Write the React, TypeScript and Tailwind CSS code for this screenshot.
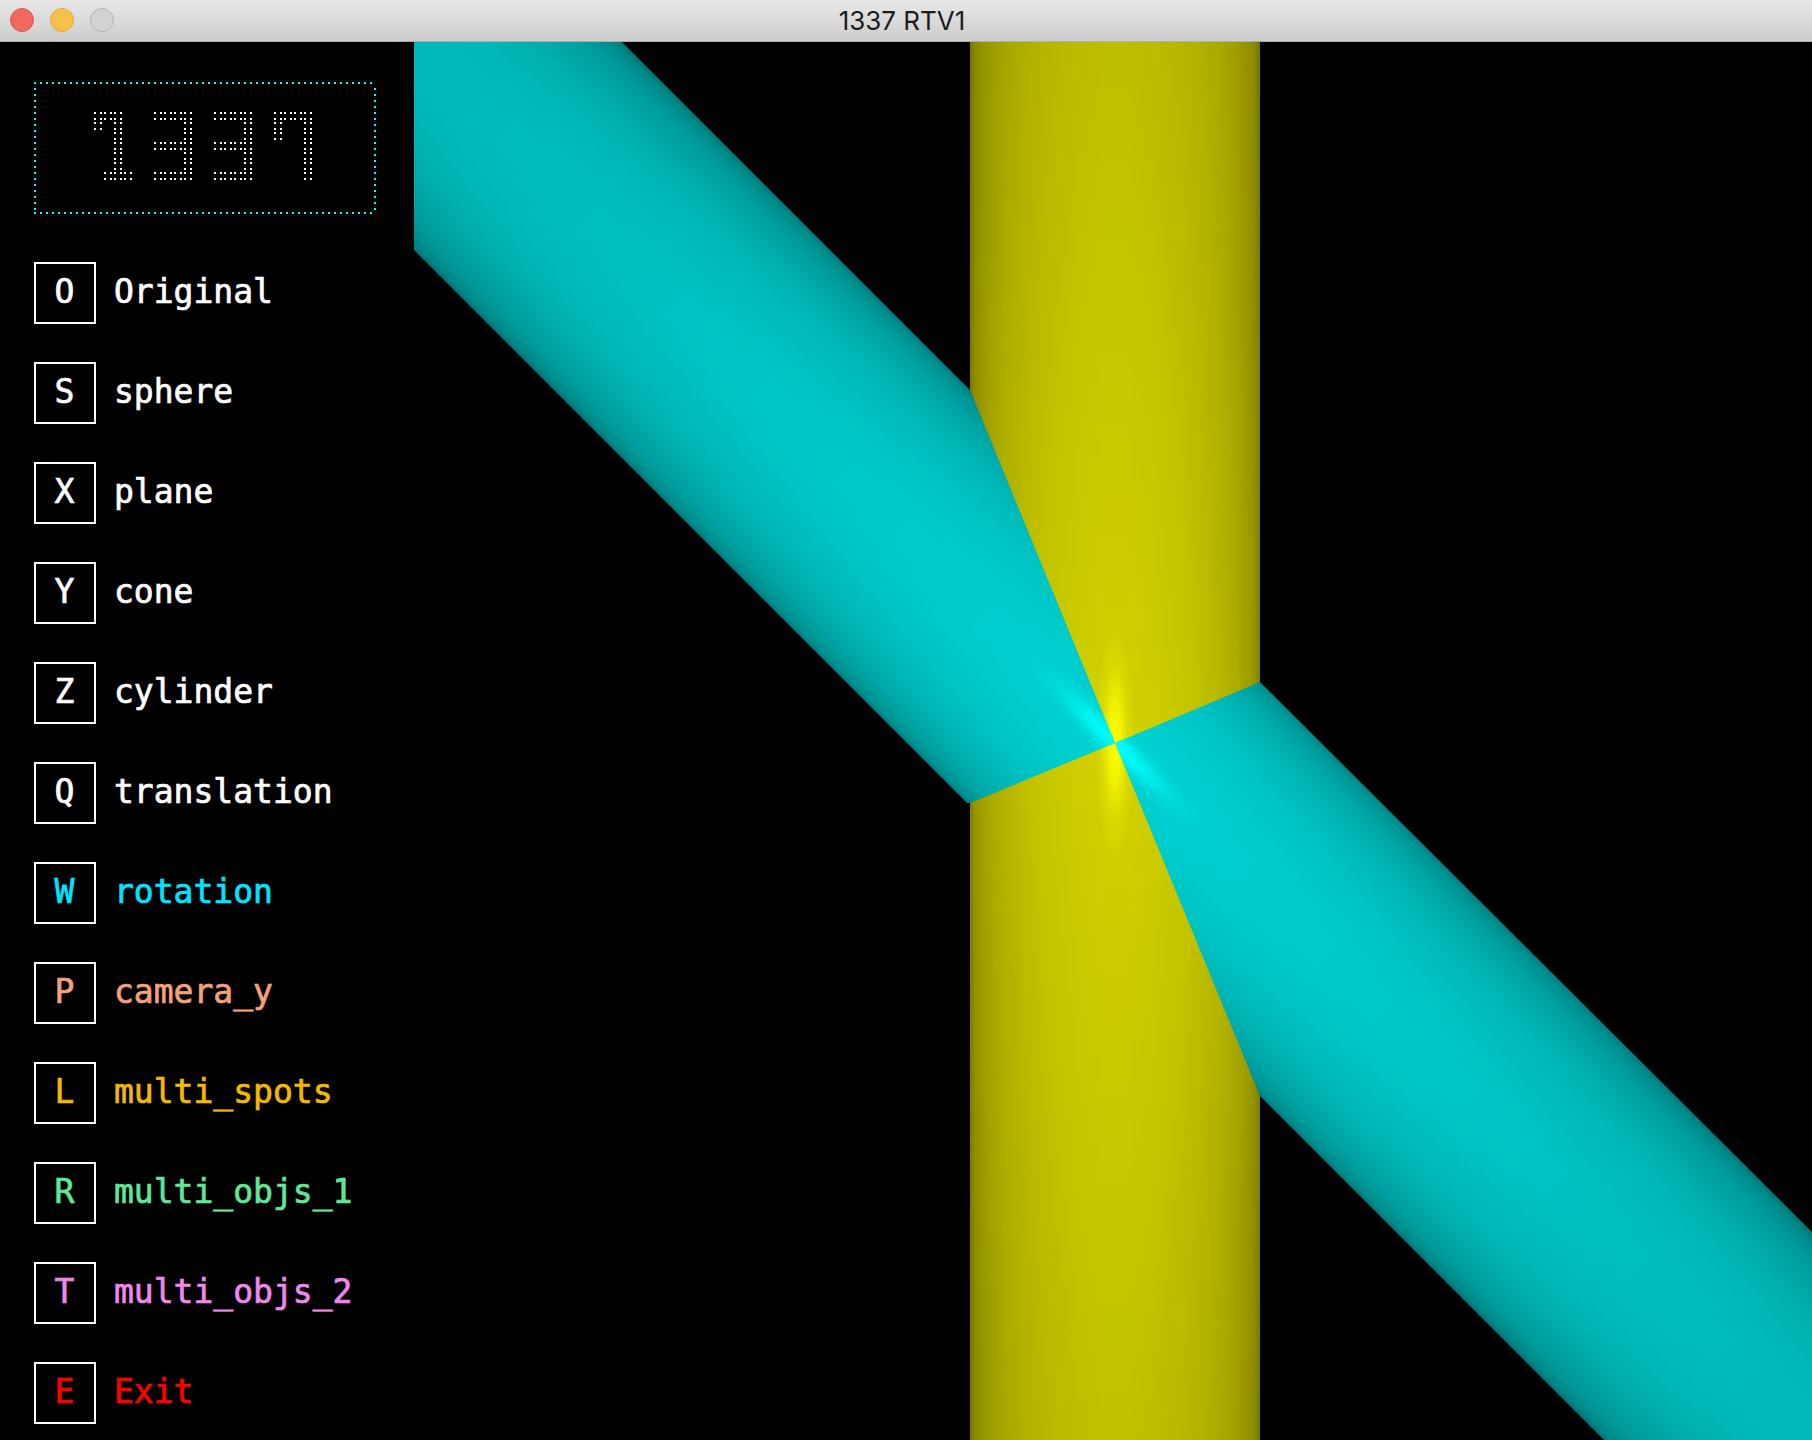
import React from 'react';

const menuItems = [
    { key: 'O', label: 'Original', color: 'text-white' },
    { key: 'S', label: 'sphere', color: 'text-white' },
    { key: 'X', label: 'plane', color: 'text-white' },
    { key: 'Y', label: 'cone', color: 'text-white' },
    { key: 'Z', label: 'cylinder', color: 'text-white' },
    { key: 'Q', label: 'translation', color: 'text-white' },
    { key: 'W', label: 'rotation', color: 'text-[#00e5ff]' },
    { key: 'P', label: 'camera_y', color: 'text-[#f4a27a]' },
    { key: 'L', label: 'multi_spots', color: 'text-[#f5b800]' },
    { key: 'R', label: 'multi_objs_1', color: 'text-[#5fe898]' },
    { key: 'T', label: 'multi_objs_2', color: 'text-[#ef88ea]' },
    { key: 'E', label: 'Exit', color: 'text-[#ff0000]' },
];

// brightness across a cylinder, from one edge to the other
const shade: [number, number][] = Array.from({ length: 61 }, (_, i) => {
    const t = i / 30 - 1;
    return [i / 60, 0.5 + 0.32 * Math.sqrt(1 - t * t)];
});

const digits = [
    ['XXX.', 'X.X.', '..X.', '..X.', '..X.', '..X.', '.XXX'],
    ['XXXX', '...X', '...X', 'XXXX', '...X', '...X', 'XXXX'],
    ['XXXX', '...X', '...X', 'XXXX', '...X', '...X', 'XXXX'],
    ['XXXX', 'X..X', 'X..X', '...X', '...X', '...X', '...X'],
];

const Logo = () => {
    const dots: { x: number; y: number }[] = [];
    digits.forEach((rows, d) => {
        rows.forEach((row, r) => {
            row.split('').forEach((cell, c) => {
                if (cell !== 'X') return;
                [0, 6].forEach((dx) => {
                    [0, 6].forEach((dy) => {
                        dots.push({ x: 94 + d * 60 + c * 10 + dx, y: 112 + r * 10 + dy });
                    });
                });
            });
        });
    });

    const frame: { x: number; y: number }[] = [];
    for (let x = 34; x <= 374; x += 6) {
        frame.push({ x, y: 82 });
        frame.push({ x, y: 212 });
    }
    for (let y = 88; y < 212; y += 6) {
        frame.push({ x: 34, y });
        frame.push({ x: 374, y });
    }

    return (
        <svg className="block w-[342px] h-[132px]" viewBox="34 82 342 132" shapeRendering="crispEdges" role="img" aria-label="1337">
            {frame.map((p, i) => (
                <rect key={i} x={p.x} y={p.y} width="2" height="2" fill="#00ffff" />
            ))}
            {dots.map((p, i) => (
                <rect key={i} x={p.x} y={p.y} width="2" height="2" fill="#ffffff" />
            ))}
        </svg>
    );
};

const Scene = () => (
    <svg className="block w-[1398px] h-[1398px]" viewBox="414 42 1398 1398">
        <defs>
            <linearGradient id="yellowBody" gradientUnits="userSpaceOnUse" x1="970" y1="0" x2="1260" y2="0">
                {shade.map(([o, v]) => (
                    <stop key={o} offset={o} stopColor={`rgb(${v * 255},${v * 255},0)`} />
                ))}
            </linearGradient>
            <linearGradient id="cyanBody" gradientUnits="userSpaceOnUse" x1="1219" y1="639" x2="1011" y2="847">
                {shade.map(([o, v]) => (
                    <stop key={o} offset={o} stopColor={`rgb(0,${v * 255},${v * 255})`} />
                ))}
            </linearGradient>
            <linearGradient id="yellowFade" gradientUnits="userSpaceOnUse" x1="0" y1="42" x2="0" y2="1440">
                <stop offset="0" stopColor="#000" stopOpacity="0.09" />
                <stop offset="0.5" stopColor="#000" stopOpacity="0" />
                <stop offset="1" stopColor="#000" stopOpacity="0.08" />
            </linearGradient>
            <linearGradient id="cyanFade" gradientUnits="userSpaceOnUse" x1="465" y1="93" x2="1765" y2="1393">
                <stop offset="0" stopColor="#000" stopOpacity="0.11" />
                <stop offset="0.5" stopColor="#000" stopOpacity="0" />
                <stop offset="1" stopColor="#000" stopOpacity="0.11" />
            </linearGradient>
            <radialGradient id="yellowSpot">
                <stop offset="0" stopColor="#ffff00" stopOpacity="1" />
                <stop offset="0.3" stopColor="#ffff00" stopOpacity="0.75" />
                <stop offset="0.65" stopColor="#ffff00" stopOpacity="0.2" />
                <stop offset="1" stopColor="#ffff00" stopOpacity="0" />
            </radialGradient>
            <radialGradient id="cyanSpot">
                <stop offset="0" stopColor="#00ffff" stopOpacity="1" />
                <stop offset="0.3" stopColor="#00ffff" stopOpacity="0.75" />
                <stop offset="0.65" stopColor="#00ffff" stopOpacity="0.2" />
                <stop offset="1" stopColor="#00ffff" stopOpacity="0" />
            </radialGradient>
            <clipPath id="cyanClip">
                <path
                    shapeRendering="crispEdges"
                    d="M414 42H622L970 390L1115 743L970 803L967 803L414 250Z M1115 743L1260 682L1812 1232V1440H1604L1260 1096Z"
                />
            </clipPath>
        </defs>

        <rect x="970" y="42" width="290" height="1398" fill="url(#yellowBody)" shapeRendering="crispEdges" />
        <rect x="970" y="42" width="290" height="1398" fill="url(#yellowFade)" shapeRendering="crispEdges" />
        <ellipse cx="1115" cy="743" rx="20" ry="120" fill="url(#yellowSpot)" />

        <g clipPath="url(#cyanClip)">
            <rect x="414" y="42" width="1398" height="1398" fill="url(#cyanBody)" />
            <rect x="414" y="42" width="1398" height="1398" fill="url(#cyanFade)" />
            <ellipse cx="1115" cy="743" rx="125" ry="20" transform="rotate(45 1115 743)" fill="url(#cyanSpot)" />
        </g>
    </svg>
);

export default function App() {
    return (
        <div className="w-[1812px] h-[1440px] bg-black overflow-hidden flex flex-col">
            {/* Title bar */}
            <div className="relative h-[42px] shrink-0 flex items-center justify-center pr-[8px] bg-gradient-to-b from-[#e8e8e8] to-[#cdcdcd] border-b border-[#aeaeae]">
                <div className="absolute left-[10px] top-[8px] flex gap-[16px]">
                    <span className="w-[24px] h-[24px] rounded-full bg-[#f0695f] border border-[#dc5a50]" />
                    <span className="w-[24px] h-[24px] rounded-full bg-[#f7c04d] border border-[#e3a93c]" />
                    <span className="w-[24px] h-[24px] rounded-full bg-[#d2d2d2] border border-[#b4b4b4]" />
                </div>
                <span className="text-[26px] leading-none text-[#1c1c1c] font-['Inter',sans-serif]">1337 RTV1</span>
            </div>

            <div className="flex flex-1 min-h-0">
                {/* Key menu */}
                <div className="w-[414px] shrink-0 pl-[34px] pt-[40px] flex flex-col font-['DejaVu_Sans_Mono',monospace]">
                    <Logo />
                    <div className="mt-[48px] flex flex-col gap-[38px]">
                        {menuItems.map((item) => (
                            <div
                                key={item.key}
                                className={`flex items-center gap-[18px] h-[62px] text-[33px] leading-none [-webkit-text-stroke:0.7px_currentColor] ${item.color}`}
                            >
                                <div className="w-[62px] h-[62px] border-2 border-white flex items-center justify-center pb-[4px] pr-[1px]">
                                    {item.key}
                                </div>
                                <span className="pb-[4px]">{item.label}</span>
                            </div>
                        ))}
                    </div>
                </div>

                <Scene />
            </div>
        </div>
    );
}
